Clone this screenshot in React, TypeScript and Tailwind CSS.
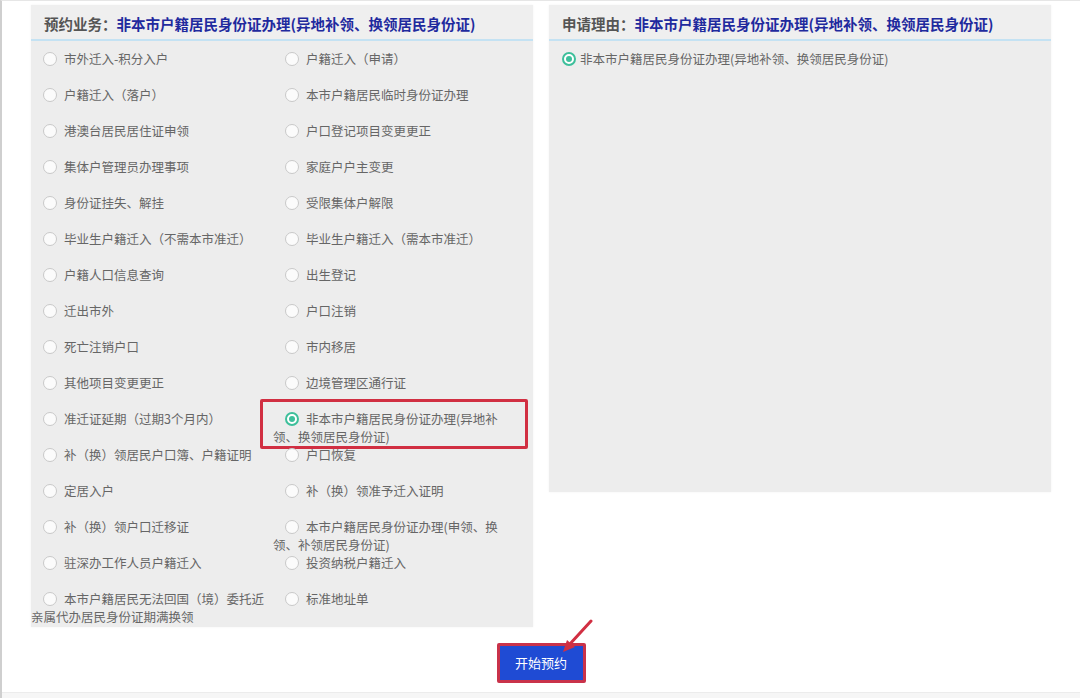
import React from "react";

const leftItems = [
  "市外迁入-积分入户",
  "户籍迁入（落户）",
  "港澳台居民居住证申领",
  "集体户管理员办理事项",
  "身份证挂失、解挂",
  "毕业生户籍迁入（不需本市准迁）",
  "户籍人口信息查询",
  "迁出市外",
  "死亡注销户口",
  "其他项目变更更正",
  "准迁证延期（过期3个月内）",
  "补（换）领居民户口簿、户籍证明",
  "定居入户",
  "补（换）领户口迁移证",
  "驻深办工作人员户籍迁入",
  "本市户籍居民无法回国（境）委托近亲属代办居民身份证期满换领",
];

const rightItems = [
  "户籍迁入（申请）",
  "本市户籍居民临时身份证办理",
  "户口登记项目变更更正",
  "家庭户户主变更",
  "受限集体户解限",
  "毕业生户籍迁入（需本市准迁）",
  "出生登记",
  "户口注销",
  "市内移居",
  "边境管理区通行证",
  "非本市户籍居民身份证办理(异地补领、换领居民身份证)",
  "户口恢复",
  "补（换）领准予迁入证明",
  "本市户籍居民身份证办理(申领、换领、补领居民身份证)",
  "投资纳税户籍迁入",
  "标准地址单",
];

function Radio({ checked }: { checked?: boolean }) {
  if (checked) {
    return (
      <span className="relative inline-block align-top top-[2px] w-[14px] h-[14px] rounded-full border-2 border-[#3dbf9b] bg-white">
        <span className="absolute left-[2px] top-[2px] w-[6px] h-[6px] rounded-full bg-[#3dbf9b]" />
      </span>
    );
  }
  return (
    <span className="relative inline-block align-top top-[2px] w-[14px] h-[14px] rounded-full border border-[#c9c9c9] bg-[#fbfbfb]" />
  );
}

function Item({ text, checked }: { text: string; checked?: boolean }) {
  return (
    <div className="relative h-[36px] leading-[18px] text-[12.5px] text-[#666]">
      <span className="inline-block align-top h-[18px] ml-[12px] mr-[7px]">
        <Radio checked={checked} />
      </span>
      {text}
      {checked && (
        <div className="absolute left-[-13px] top-[-11px] w-[268px] h-[50px] border-[3px] border-[#d12f42] rounded-[2px]" />
      )}
    </div>
  );
}

function Header({ label }: { label: string }) {
  return (
    <div className="h-[36px] pt-[3px] pl-[13px] flex items-center border-b-2 border-[#c4e2f3] bg-[#efefef] text-[14.5px] font-bold whitespace-nowrap">
      <span className="text-[#555]">{label}：</span>
      <span className="text-[#1f2a9e]">非本市户籍居民身份证办理(异地补领、换领居民身份证)</span>
    </div>
  );
}

export default function App() {
  const rows = leftItems.map((l, i) => [l, rightItems[i]]);
  return (
    <div className="relative w-[1080px] h-[698px] overflow-hidden bg-white border-l-2 border-t border-l-[#cfcfcf] border-t-[#e6e6e6] font-['Noto_Sans_CJK_SC','Liberation_Sans',sans-serif]">
      <div className="flex gap-[16px] pl-[29px] pt-[4px]">
        <div className="w-[502px] h-[622px] bg-[#ededed] shadow-[0_0_2px_rgba(0,0,0,0.06)]">
          <Header label="预约业务" />
          <div className="grid grid-cols-[242px_234px] pt-[9px]">
            {rows.map(([l, r], i) => (
              <React.Fragment key={i}>
                <Item text={l} />
                <Item text={r} checked={i === 10} />
              </React.Fragment>
            ))}
          </div>
        </div>
        <div className="w-[502px] h-[487px] bg-[#ededed] shadow-[0_0_2px_rgba(0,0,0,0.06)]">
          <Header label="申请理由" />
          <div className="pt-[9px] pl-[13px] h-[36px] leading-[18px] flex items-start">
            <span className="inline-block h-[18px] mr-[4px]">
              <Radio checked />
            </span>
            <span className="text-[12.5px] text-[#666]">非本市户籍居民身份证办理(异地补领、换领居民身份证)</span>
          </div>
        </div>
      </div>
      <div className="flex justify-center mt-[16px]">
        <div className="relative">
          <button className="w-[89px] h-[40px] border-[3px] border-[#c9324a] bg-[#1f4bd4] text-white text-[13px] rounded-[2px]">
            开始预约
          </button>
          <svg
            className="absolute left-[62px] top-[-24px]"
            width="40"
            height="40"
            viewBox="0 0 40 40"
          >
            <line x1="32" y1="2" x2="10" y2="26" stroke="#d12f42" strokeWidth="3" strokeLinecap="round" />
            <polygon points="4,33 8,21 16,28" fill="#d12f42" />
          </svg>
        </div>
      </div>
      <div className="absolute left-0 right-0 bottom-0 h-[6px] bg-[#f6f6f6] border-t border-[#ececec]" />
    </div>
  );
}
